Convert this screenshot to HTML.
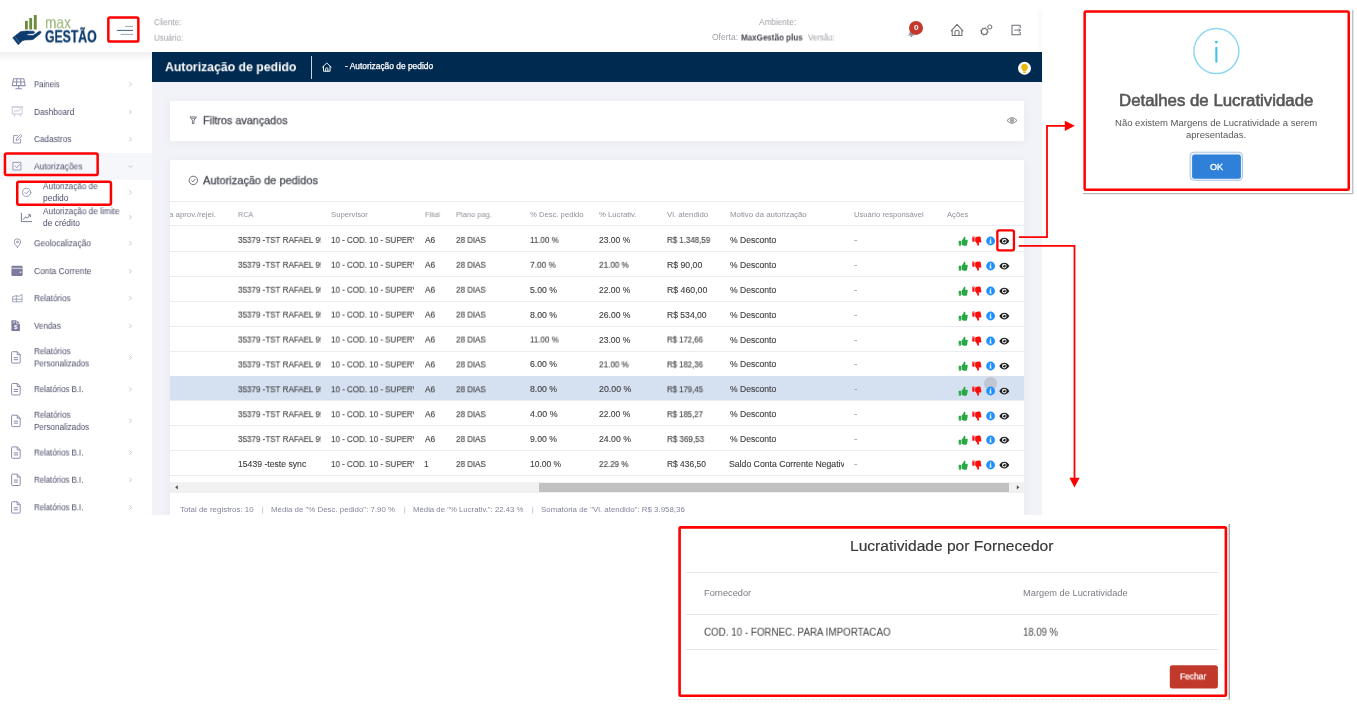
<!DOCTYPE html>
<html lang="pt-BR">
<head>
<meta charset="utf-8">
<title>maxGestão - Autorização de pedido</title>
<style>
*{box-sizing:border-box;margin:0;padding:0}
html,body{width:1357px;height:707px;overflow:hidden;background:#fff}
body{position:relative;font-family:"Liberation Sans",sans-serif;-webkit-font-smoothing:antialiased}
.t{position:absolute;white-space:nowrap;transform-origin:0 50%;display:block;will-change:transform}
.t i{font-style:normal}
.a{position:absolute}
svg{position:absolute;overflow:visible}
.app{position:absolute;left:0;top:0;width:1042px;height:515.4px;background:#fff;overflow:hidden}
.hdr{position:absolute;left:0;top:0;width:1042px;height:52px;background:#fff}
.side{position:absolute;left:0;top:52px;width:152px;height:463px;background:#fff}
.side:before{content:"";position:absolute;left:0;top:0;width:152px;height:9px;background:linear-gradient(#efeff2,#fff)}
.main{position:absolute;left:151.6px;top:81.5px;width:890.4px;height:433px;background:#f2f3f8}
.bar{position:absolute;left:151.6px;top:52px;width:890.4px;height:29.7px;background:#012a50}
.card{position:absolute;background:#fff;box-shadow:0 1px 9px rgba(82,63,105,.07)}
.hl{position:absolute;height:1px;background:#ebedf2}
</style>
</head>
<body>
<div class="app">
<header class="hdr">
<svg class="logo" style="left:0;top:0" width="110" height="52" viewBox="0 0 110 52">
<rect x="25" y="20.9" width="2.8" height="8.6" fill="#6c8b3c"/>
<rect x="29.3" y="18" width="2.8" height="11.5" fill="#6c8b3c"/>
<rect x="33.8" y="15" width="2.9" height="14.5" fill="#6c8b3c"/>
<path d="M12.7 37.8 L17.2 34.2 L20.8 31.6 L26.4 31 L33 31.2 Q34.8 31.4 34.5 32.6 Q34.3 33.5 33 33.6 L27.3 33.9 L26.9 35.3 L33 35.5 L39.4 31.3 Q40.6 30.9 41 31.9 Q41.2 32.8 40.4 33.5 L33.7 38.9 Q33 39.6 32 39.7 L24.9 40 L22.3 40.8 L18.3 44.8 Z" fill="#0e3b6d" stroke="#0e3b6d" stroke-width=".6" stroke-linejoin="round"/>
<path d="M15.2 37.2 L19.6 42.6" stroke="#fff" stroke-width=".5" opacity=".55"/>
</svg>
<span class="t" id="t0" style="left:45.0px;top:12px;font-size:16.5px;line-height:20px;color:#93ae6c;font-weight:400;transform:translateY(0.31px) scaleX(0.8277);">max</span>
<span class="t" id="t1" style="left:45.2px;top:26px;font-size:16.1px;line-height:20px;color:#0e3b6d;font-weight:700;transform:translateY(0.31px) scaleX(0.7592);-webkit-text-stroke:.35px #0e3b6d;">GESTÃO</span>
<svg style="left:110px;top:20px" width="28" height="20" viewBox="110 20 28 20">
<path d="M125.1 26.4H133M120.6 34.4H133" stroke="#93a7bf" stroke-width="1" fill="none"/><path d="M116.8 30.4H133" stroke="#4d6c90" stroke-width="1.1" fill="none"/></svg>
<span class="t" id="t2" style="left:153.7px;top:16px;font-size:8.5px;line-height:12px;color:#a0a1a8;font-weight:400;transform:translateY(0.14px) scaleX(0.9470);">Cliente:</span>
<span class="t" id="t3" style="left:153.7px;top:32px;font-size:8.5px;line-height:12px;color:#a0a1a8;font-weight:400;transform:translateY(-0.26px) scaleX(0.9192);">Usuário:</span>
<span class="t" id="t4" style="left:758.8px;top:16px;font-size:8.5px;line-height:12px;color:#a0a1a8;font-weight:400;transform:translateY(0.04px) scaleX(0.9718);">Ambiente:</span>
<span class="t" id="t5" style="left:712.4px;top:31px;font-size:8.5px;line-height:12px;color:#a0a1a8;font-weight:400;transform:translateY(0.44px) scaleX(1.0006);">Oferta:</span>
<span class="t" id="t6" style="left:740.8px;top:31px;font-size:8.5px;line-height:12px;color:#46474e;font-weight:700;transform:translateY(0.44px) scaleX(0.9450);">MaxGestão plus</span>
<span class="t" id="t7" style="left:807.8px;top:31px;font-size:8.5px;line-height:12px;color:#a0a1a8;font-weight:400;transform:translateY(0.44px) scaleX(0.9296);">Versão:</span>
<svg style="left:905px;top:18px" width="22" height="22" viewBox="905 18 22 22">
<path d="M908.2 35.4 q1.4-1.2 1.6-3.6 l3.2 0 q.2 2.4 1.6 3.6 z" fill="#8d8e9c"/>
<circle cx="911.4" cy="36.2" r=".9" fill="#8d8e9c"/>
<circle cx="916" cy="27.9" r="7" fill="#c5382c"/>
</svg>
<span class="t" id="t8" style="left:913.8px;top:22px;font-size:7.6px;line-height:11px;color:#fff;font-weight:700;transform:translateY(0.32px) scaleX(1.0863);">0</span>
<svg style="left:949px;top:22px" width="16" height="16" viewBox="949 22 16 16">
<path d="M951.2 30.9 L957 24.3 L962.9 30.9 M952.2 30 V35.4 H961.9 V30 M955 35.4 V31.2 Q955 30.4 957 30.4 Q959 30.4 959 31.2 V35.4" fill="none" stroke="#6e6e74" stroke-width="1.05" stroke-linejoin="round" stroke-linecap="round"/></svg>
<svg style="left:979px;top:22px" width="16" height="16" viewBox="979 22 16 16">
<circle cx="984.4" cy="31.5" r="3" fill="none" stroke="#6e6e74" stroke-width="1.05"/>
<circle cx="984.4" cy="31.5" r="3.8" fill="none" stroke="#6e6e74" stroke-width=".9" stroke-dasharray="1.2 1.78"/>
<circle cx="989.8" cy="27" r="2.1" fill="none" stroke="#6e6e74" stroke-width="1"/>
</svg>
<svg style="left:1009px;top:22px" width="16" height="16" viewBox="1009 22 16 16">
<path d="M1020.2 28 V25.2 H1012 V34.7 H1020.2 V32" fill="none" stroke="#6e6e74" stroke-width="1.05" stroke-linejoin="round"/>
<path d="M1014.6 30.1 H1020.4 M1018.8 28.6 L1020.5 30.1 L1018.8 31.6" fill="none" stroke="#6e6e74" stroke-width=".95" stroke-linejoin="round" stroke-linecap="round"/></svg>
<div class="a" style="left:1038px;top:10px;width:4px;height:40px;background:#fafafb"></div></header><nav class="side">
<div class="a" style="left:0;top:101px;width:152px;height:27px;background:#f6f7fb"></div></nav>
<span class="t" id="t9" style="left:33.9px;top:78px;font-size:8.7px;line-height:12px;color:#4a4c68;font-weight:400;transform:translateY(0.21px) scaleX(0.8947);">Paineis</span>
<span class="t" id="t10" style="left:33.9px;top:106px;font-size:8.7px;line-height:12px;color:#4a4c68;font-weight:400;transform:translateY(-0.09px) scaleX(0.9479);">Dashboard</span>
<span class="t" id="t11" style="left:33.9px;top:133px;font-size:8.7px;line-height:12px;color:#4a4c68;font-weight:400;transform:translateY(0.11px) scaleX(0.9442);">Cadastros</span>
<span class="t" id="t12" style="left:33.9px;top:160px;font-size:8.7px;line-height:12px;color:#4a4c68;font-weight:400;transform:translateY(0.41px) scaleX(0.9635);">Autorizações</span>
<span class="t" id="t13" style="left:33.9px;top:237px;font-size:8.7px;line-height:12px;color:#4a4c68;font-weight:400;transform:translateY(0.21px) scaleX(0.9578);">Geolocalização</span>
<span class="t" id="t14" style="left:33.9px;top:265px;font-size:8.7px;line-height:12px;color:#4a4c68;font-weight:400;transform:translateY(0.11px) scaleX(0.9662);">Conta Corrente</span>
<span class="t" id="t15" style="left:33.9px;top:292px;font-size:8.7px;line-height:12px;color:#4a4c68;font-weight:400;transform:translateY(0.21px) scaleX(0.9355);">Relatórios</span>
<span class="t" id="t16" style="left:33.9px;top:320px;font-size:8.7px;line-height:12px;color:#4a4c68;font-weight:400;transform:translateY(-0.19px) scaleX(0.9241);">Vendas</span>
<span class="t" id="t17" style="left:33.9px;top:383px;font-size:8.7px;line-height:12px;color:#4a4c68;font-weight:400;transform:translateY(0.11px) scaleX(0.9054);">Relatórios B.I.</span>
<span class="t" id="t18" style="left:33.9px;top:447px;font-size:8.7px;line-height:12px;color:#4a4c68;font-weight:400;transform:translateY(-0.49px) scaleX(0.9054);">Relatórios B.I.</span>
<span class="t" id="t19" style="left:33.9px;top:474px;font-size:8.7px;line-height:12px;color:#4a4c68;font-weight:400;transform:translateY(-0.29px) scaleX(0.9054);">Relatórios B.I.</span>
<span class="t" id="t20" style="left:33.9px;top:501px;font-size:8.7px;line-height:12px;color:#4a4c68;font-weight:400;transform:translateY(0.31px) scaleX(0.9054);">Relatórios B.I.</span>
<span class="t" id="t21" style="left:33.9px;top:345px;font-size:8.7px;line-height:12px;color:#4a4c68;font-weight:400;transform:translateY(0.21px) scaleX(0.9355);">Relatórios</span>
<span class="t" id="t22" style="left:33.9px;top:357px;font-size:8.7px;line-height:12px;color:#4a4c68;font-weight:400;transform:translateY(0.41px) scaleX(0.9275);">Personalizados</span>
<span class="t" id="t23" style="left:33.9px;top:409px;font-size:8.7px;line-height:12px;color:#4a4c68;font-weight:400;transform:translateY(-0.29px) scaleX(0.9355);">Relatórios</span>
<span class="t" id="t24" style="left:33.9px;top:421px;font-size:8.7px;line-height:12px;color:#4a4c68;font-weight:400;transform:translateY(-0.09px) scaleX(0.9275);">Personalizados</span>
<span class="t" id="t25" style="left:42.8px;top:180px;font-size:8.3px;line-height:12px;color:#4a4c68;font-weight:400;transform:translateY(0.17px) scaleX(0.9899);">Autorização de</span>
<span class="t" id="t26" style="left:42.8px;top:192px;font-size:8.3px;line-height:12px;color:#4a4c68;font-weight:400;transform:translateY(0.17px) scaleX(1.0232);">pedido</span>
<span class="t" id="t27" style="left:42.8px;top:205px;font-size:8.3px;line-height:12px;color:#4a4c68;font-weight:400;transform:translateY(0.17px) scaleX(0.9920);">Autorização de limite</span>
<span class="t" id="t28" style="left:42.8px;top:217px;font-size:8.3px;line-height:12px;color:#4a4c68;font-weight:400;transform:translateY(-0.03px) scaleX(1.0127);">de crédito</span>
<svg style="left:0;top:0" width="152" height="515" viewBox="0 0 152 515"><path d="M129.4 82.2 l2 2.1 l-2 2.1" fill="none" stroke="#b3b5c6" stroke-width=".8"/><path d="M129.4 109.9 l2 2.1 l-2 2.1" fill="none" stroke="#b3b5c6" stroke-width=".8"/><path d="M129.4 137.1 l2 2.1 l-2 2.1" fill="none" stroke="#b3b5c6" stroke-width=".8"/><path d="M129.4 190.3 l2 2.1 l-2 2.1" fill="none" stroke="#b3b5c6" stroke-width=".8"/><path d="M129.4 215.1 l2 2.1 l-2 2.1" fill="none" stroke="#b3b5c6" stroke-width=".8"/><path d="M129.4 241.2 l2 2.1 l-2 2.1" fill="none" stroke="#b3b5c6" stroke-width=".8"/><path d="M129.4 269.1 l2 2.1 l-2 2.1" fill="none" stroke="#b3b5c6" stroke-width=".8"/><path d="M129.4 296.2 l2 2.1 l-2 2.1" fill="none" stroke="#b3b5c6" stroke-width=".8"/><path d="M129.4 323.8 l2 2.1 l-2 2.1" fill="none" stroke="#b3b5c6" stroke-width=".8"/><path d="M129.4 355.3 l2 2.1 l-2 2.1" fill="none" stroke="#b3b5c6" stroke-width=".8"/><path d="M129.4 387.1 l2 2.1 l-2 2.1" fill="none" stroke="#b3b5c6" stroke-width=".8"/><path d="M129.4 418.8 l2 2.1 l-2 2.1" fill="none" stroke="#b3b5c6" stroke-width=".8"/><path d="M129.4 450.5 l2 2.1 l-2 2.1" fill="none" stroke="#b3b5c6" stroke-width=".8"/><path d="M129.4 477.7 l2 2.1 l-2 2.1" fill="none" stroke="#b3b5c6" stroke-width=".8"/><path d="M129.4 505.3 l2 2.1 l-2 2.1" fill="none" stroke="#b3b5c6" stroke-width=".8"/><path d="M128.6 165.7 l1.9 1.7 l1.9 -1.7" fill="none" stroke="#b3b5c6" stroke-width=".8"/><g fill="none" stroke="#8e90ad" stroke-width=".9" stroke-linejoin="round" stroke-linecap="round"><path d="M13.6 78.7 H23.8 L25.2 85.6 H12.2 Z M12.9 82 H24.5 M16.9 78.7 L16.4 85.6 M20.5 78.7 L21 85.6 M18.7 85.6 V88.4 M15.8 88.7 H21.6" stroke-width="1.05"/><g stroke="#c3c5d6"><path d="M12.6 107 H22.2 V114 H12.6 Z M12 107 H22.8 M15 114 L14.2 116.4 M19.8 114 L20.6 116.4"/></g><path d="M14 112.2 L16 110.4 L17.6 111.4 L20.6 108.8" stroke="#b9bbd0"/><path d="M17.4 135.6 H13.4 V143 H20.6 V139.2 M16.2 140.2 L16.6 138.4 L20.6 134.4 L22 135.8 L18 139.8 Z"/><path d="M13.3 162.4 H20.9 V170 H13.3 Z M15.2 166 L16.8 167.7 L19.4 164.6"/><circle cx="26.7" cy="192.4" r="4.1"/><path d="M24.8 192.5 L26.2 193.9 L28.7 191"/><path d="M21.4 213.2 V221.6 H31.6 M23.4 219.4 L25.6 216.8 L27.4 218.2 L30.2 215 M28.4 214.8 H30.4 V216.8" stroke="#6c6e8c"/><path d="M17.4 247.4 Q14.2 243.6 14.2 242 A3.2 3.2 0 0 1 20.6 242 Q20.6 243.6 17.4 247.4 Z"/><circle cx="17.4" cy="242" r=".9"/><path d="M13 296.6 L16.4 295.6 L19 296.4 L22 294.4 V301.8 H13 Z M13 299.2 H22 M16.4 295.6 V301.8" stroke="#9c9eb8"/></g><path d="M12.6 265.8 H21.4 Q22.6 265.8 22.6 267 V274.8 Q22.6 276 21.4 276 H12.6 Q11.4 276 11.4 274.8 V267 Q11.4 265.8 12.6 265.8 Z" fill="#7d7c9e"/><path d="M11.4 268.3 H22.6" stroke="#fff" stroke-width=".7"/><circle cx="20.4" cy="272.2" r=".8" fill="#fff"/><path d="M11.4 320.2 H16.6 L19.9 323.4 V331 H11.4 Z" fill="#7d7c9e"/><path d="M16.4 320 V323.6 H20" stroke="#fff" stroke-width=".6" fill="none"/><path d="M12.8 321.6 H15 M12.8 322.8 H15" stroke="#fff" stroke-width=".5"/><path d="M12.6 351.7 H17.4 L20.2 354.5 V362.1 Q20.2 363.1 19.2 363.1 H12.6 Q11.6 363.1 11.6 362.1 V352.7 Q11.6 351.7 12.6 351.7 Z M17.2 351.9 V354.7 H20 M13.8 357.7 H18 M13.8 359.7 H18" fill="none" stroke="#7f81a2" stroke-width=".9" stroke-linejoin="round"/><path d="M12.6 383.5 H17.4 L20.2 386.3 V393.9 Q20.2 394.9 19.2 394.9 H12.6 Q11.6 394.9 11.6 393.9 V384.5 Q11.6 383.5 12.6 383.5 Z M17.2 383.7 V386.5 H20 M13.8 389.5 H18 M13.8 391.5 H18" fill="none" stroke="#7f81a2" stroke-width=".9" stroke-linejoin="round"/><path d="M12.6 415.2 H17.4 L20.2 418.0 V425.6 Q20.2 426.6 19.2 426.6 H12.6 Q11.6 426.6 11.6 425.6 V416.2 Q11.6 415.2 12.6 415.2 Z M17.2 415.4 V418.2 H20 M13.8 421.2 H18 M13.8 423.2 H18" fill="none" stroke="#7f81a2" stroke-width=".9" stroke-linejoin="round"/><path d="M12.6 446.9 H17.4 L20.2 449.7 V457.3 Q20.2 458.3 19.2 458.3 H12.6 Q11.6 458.3 11.6 457.3 V447.9 Q11.6 446.9 12.6 446.9 Z M17.2 447.1 V449.9 H20 M13.8 452.9 H18 M13.8 454.9 H18" fill="none" stroke="#7f81a2" stroke-width=".9" stroke-linejoin="round"/><path d="M12.6 474.1 H17.4 L20.2 476.9 V484.5 Q20.2 485.5 19.2 485.5 H12.6 Q11.6 485.5 11.6 484.5 V475.1 Q11.6 474.1 12.6 474.1 Z M17.2 474.3 V477.1 H20 M13.8 480.1 H18 M13.8 482.1 H18" fill="none" stroke="#7f81a2" stroke-width=".9" stroke-linejoin="round"/><path d="M12.6 501.7 H17.4 L20.2 504.5 V512.1 Q20.2 513.1 19.2 513.1 H12.6 Q11.6 513.1 11.6 512.1 V502.7 Q11.6 501.7 12.6 501.7 Z M17.2 501.9 V504.7 H20 M13.8 507.7 H18 M13.8 509.7 H18" fill="none" stroke="#7f81a2" stroke-width=".9" stroke-linejoin="round"/></svg>
<span class="t" id="t29" style="left:13.6px;top:323px;font-size:6px;line-height:8px;color:#fff;font-weight:700;transform:translateY(0.05px) scaleX(1.0766);">$</span>
<div class="bar"></div>
<span class="t" id="t30" style="left:164.6px;top:58px;font-size:13.0px;line-height:17px;color:#fff;font-weight:700;transform:translateY(0.25px) scaleX(0.9426);">Autorização de pedido</span>
<div class="a" style="left:311px;top:55.5px;width:1px;height:23px;background:#c9d3e0"></div>
<svg style="left:321px;top:61px" width="12" height="12" viewBox="321 61 12 12">
<path d="M322.4 67.2 L326.8 63 L331.2 67.2 M323.5 66.4 V71.2 H330.1 V66.4 M325.7 71.2 V68.6 Q325.7 67.8 326.8 67.8 Q327.9 67.8 327.9 68.6 V71.2" fill="none" stroke="#fff" stroke-width=".95" stroke-linejoin="round" stroke-linecap="round"/></svg>
<span class="t" id="t31" style="left:345.2px;top:61px;font-size:8.2px;line-height:11px;color:#fff;font-weight:400;transform:translateY(0.44px) scaleX(1.0240);-webkit-text-stroke:.25px #fff;">- Autorização de pedido</span>
<svg style="left:1017px;top:61px" width="15" height="15" viewBox="1017 61 15 15">
<circle cx="1024.5" cy="68.3" r="6.45" fill="#fff"/>
<path d="M1024.5 63.8 a3.45 3.45 0 0 1 2.3 6 q-.7 .8 -.8 1.7 h-3 q-.1 -.9 -.8 -1.7 a3.45 3.45 0 0 1 2.3 -6 Z" fill="#ebb90d"/>
<rect x="1023.1" y="71.9" width="2.8" height="1.1" rx=".4" fill="#ebb90d"/>
</svg><main class="main"></main>
<section class="card" style="left:170px;top:101px;width:854px;height:40px"></section>
<svg style="left:188px;top:116px" width="10" height="10" viewBox="188 116 10 10">
<path d="M189.9 116.9 H196.5 L194 120.2 V123.6 H192.4 V120.2 Z" fill="none" stroke="#4a4c58" stroke-width=".75" stroke-linejoin="round"/><path d="M191.4 118.4 H195" stroke="#4a4c58" stroke-width=".6"/></svg>
<span class="t" id="t32" style="left:203.3px;top:113px;font-size:11.3px;line-height:14px;color:#494b55;font-weight:400;transform:translateY(0.25px) scaleX(0.9554);-webkit-text-stroke:.3px #494b55;">Filtros avançados</span>
<svg style="left:1006px;top:116px" width="12" height="10" viewBox="1006 116 12 10">
<path d="M1007 120.5 Q1012 114.8 1017 120.5 Q1012 126.2 1007 120.5 Z" fill="none" stroke="#66676e" stroke-width=".8"/>
<circle cx="1012" cy="120.5" r="1.7" fill="none" stroke="#66676e" stroke-width=".8"/><circle cx="1012" cy="120.5" r=".7" fill="#55565c"/></svg>
<section class="card" style="left:170px;top:160px;width:854px;height:360px"></section>
<svg style="left:188px;top:175px" width="10" height="10" viewBox="188 175 10 10">
<circle cx="193.3" cy="180.4" r="4.2" fill="none" stroke="#4a4c58" stroke-width=".8"/>
<path d="M191.4 180.5 L192.8 181.9 L195.3 179" fill="none" stroke="#4a4c58" stroke-width=".8"/></svg>
<span class="t" id="t33" style="left:203.1px;top:173px;font-size:11.3px;line-height:14px;color:#494b55;font-weight:400;transform:translateY(0.25px) scaleX(0.9739);-webkit-text-stroke:.3px #494b55;">Autorização de pedidos</span>
<div class="hl" style="left:170px;top:201px;width:854px"></div>
<div class="hl" style="left:170px;top:225px;width:854px"></div>
<div class="a" style="left:170.0px;top:209px;width:50.0px;height:11px;overflow:hidden">
<span class="t" id="t34" style="left:-1.4px;top:0px;font-size:7.6px;line-height:11px;color:#8f919c;font-weight:400;transform:translateY(0.02px) scaleX(1.0318);">a aprov./rejei.</span></div>
<span class="t" id="t35" style="left:237.7px;top:209px;font-size:7.6px;line-height:11px;color:#8f919c;font-weight:400;transform:translateY(0.02px) scaleX(0.9472);">RCA</span>
<span class="t" id="t36" style="left:331.4px;top:209px;font-size:7.6px;line-height:11px;color:#8f919c;font-weight:400;transform:translateY(0.02px) scaleX(1.0166);">Supervisor</span>
<span class="t" id="t37" style="left:424.8px;top:209px;font-size:7.6px;line-height:11px;color:#8f919c;font-weight:400;transform:translateY(0.02px) scaleX(0.9536);">Filial</span>
<span class="t" id="t38" style="left:455.6px;top:209px;font-size:7.6px;line-height:11px;color:#8f919c;font-weight:400;transform:translateY(0.02px) scaleX(0.9804);">Plano pag.</span>
<span class="t" id="t39" style="left:530.3px;top:209px;font-size:7.6px;line-height:11px;color:#8f919c;font-weight:400;transform:translateY(0.02px) scaleX(1.0078);">% Desc. pedido</span>
<span class="t" id="t40" style="left:598.7px;top:209px;font-size:7.6px;line-height:11px;color:#8f919c;font-weight:400;transform:translateY(0.02px) scaleX(1.0135);">% Lucrativ.</span>
<span class="t" id="t41" style="left:667.1px;top:209px;font-size:7.6px;line-height:11px;color:#8f919c;font-weight:400;transform:translateY(0.02px) scaleX(1.0247);">Vl. atendido</span>
<span class="t" id="t42" style="left:729.6px;top:209px;font-size:7.6px;line-height:11px;color:#8f919c;font-weight:400;transform:translateY(0.02px) scaleX(1.0323);">Motivo da autorização</span>
<span class="t" id="t43" style="left:853.7px;top:209px;font-size:7.6px;line-height:11px;color:#8f919c;font-weight:400;transform:translateY(0.02px) scaleX(1.0053);">Usuário responsável</span>
<span class="t" id="t44" style="left:947.3px;top:209px;font-size:7.6px;line-height:11px;color:#8f919c;font-weight:400;transform:translateY(0.02px) scaleX(1.0043);">Ações</span>
<div class="row">
<div class="hl" style="left:170px;top:251px;width:854px"></div>
<div class="a" style="left:237.7px;top:234px;width:83.7px;height:12px;overflow:hidden">
<span class="t" id="t45" style="left:0.0px;top:0px;font-size:8.4px;line-height:12px;color:#404040;font-weight:400;transform:translateY(-0.09px) scaleX(0.9612);-webkit-text-stroke:.12px #404040;"><i>35379 -TST RAFAEL 9</i>9</span></div>
<div class="a" style="left:331.0px;top:234px;width:83.2px;height:12px;overflow:hidden">
<span class="t" id="t46" style="left:0.4px;top:0px;font-size:8.4px;line-height:12px;color:#404040;font-weight:400;transform:translateY(-0.09px) scaleX(0.9546);-webkit-text-stroke:.12px #404040;"><i>10 - COD. 10 - SUPER</i>V</span></div>
<span class="t" id="t47" style="left:424.6px;top:234px;font-size:8.4px;line-height:12px;color:#404040;font-weight:400;transform:translateY(-0.09px) scaleX(0.9951);-webkit-text-stroke:.12px #404040;">A6</span>
<span class="t" id="t48" style="left:455.6px;top:234px;font-size:8.4px;line-height:12px;color:#404040;font-weight:400;transform:translateY(-0.09px) scaleX(0.9582);-webkit-text-stroke:.12px #404040;">28 DIAS</span>
<span class="t" id="t49" style="left:530.3px;top:234px;font-size:8.4px;line-height:12px;color:#404040;font-weight:400;transform:translateY(-0.09px) scaleX(0.9499);-webkit-text-stroke:.12px #404040;">11.00 %</span>
<span class="t" id="t50" style="left:598.8px;top:234px;font-size:8.4px;line-height:12px;color:#404040;font-weight:400;transform:translateY(-0.09px) scaleX(1.0151);-webkit-text-stroke:.12px #404040;">23.00 %</span>
<span class="t" id="t51" style="left:667.2px;top:234px;font-size:8.4px;line-height:12px;color:#404040;font-weight:400;transform:translateY(-0.09px) scaleX(0.9465);-webkit-text-stroke:.12px #404040;">R$ 1.348,59</span>
<span class="t" id="t52" style="left:729.6px;top:234px;font-size:8.4px;line-height:12px;color:#404040;font-weight:400;transform:translateY(-0.09px) scaleX(1.0231);-webkit-text-stroke:.12px #404040;">% Desconto</span>
<span class="t" id="t53" style="left:853.7px;top:234px;font-size:8.4px;line-height:12px;color:#8f92a3;font-weight:400;transform:translateY(-0.09px) scaleX(1.2514);">-</span>
<svg style="left:955px;top:235.2px" width="60" height="12" viewBox="955 235.2 60 12"><path transform="translate(958.7 236.85) scale(.01777)" fill="#28a745" d="M104 224H24c-13.255 0-24 10.745-24 24v240c0 13.255 10.745 24 24 24h80c13.255 0 24-10.745 24-24V248c0-13.255-10.745-24-24-24zM64 472c-13.255 0-24-10.745-24-24s10.745-24 24-24 24 10.745 24 24-10.745 24-24 24zM384 81.452c0 42.416-25.97 66.208-33.277 94.548h101.723c33.397 0 59.397 27.746 59.553 58.098.084 17.938-7.546 37.249-19.439 49.197l-.11.11c9.836 23.337 8.237 56.037-9.308 79.469 8.681 25.895-.069 57.704-16.382 74.757 4.298 17.598 2.244 32.575-6.148 44.632C440.202 511.587 389.616 512 346.839 512l-2.845-.001c-48.287-.017-87.806-17.598-119.56-31.725-15.957-7.099-36.821-15.887-52.651-16.178-6.54-.12-11.783-5.457-11.783-11.998v-213.77c0-3.2 1.282-6.271 3.558-8.521 39.614-39.144 56.648-80.587 89.117-113.111 14.804-14.832 20.188-37.236 25.393-58.902C282.515 39.293 291.817 0 312 0c24 0 72 8 72 81.452z"/><path transform="translate(972.3 245.85) scale(.01777 -.01777)" fill="#fb0d0d" d="M104 224H24c-13.255 0-24 10.745-24 24v240c0 13.255 10.745 24 24 24h80c13.255 0 24-10.745 24-24V248c0-13.255-10.745-24-24-24zM64 472c-13.255 0-24-10.745-24-24s10.745-24 24-24 24 10.745 24 24-10.745 24-24 24zM384 81.452c0 42.416-25.97 66.208-33.277 94.548h101.723c33.397 0 59.397 27.746 59.553 58.098.084 17.938-7.546 37.249-19.439 49.197l-.11.11c9.836 23.337 8.237 56.037-9.308 79.469 8.681 25.895-.069 57.704-16.382 74.757 4.298 17.598 2.244 32.575-6.148 44.632C440.202 511.587 389.616 512 346.839 512l-2.845-.001c-48.287-.017-87.806-17.598-119.56-31.725-15.957-7.099-36.821-15.887-52.651-16.178-6.54-.12-11.783-5.457-11.783-11.998v-213.77c0-3.2 1.282-6.271 3.558-8.521 39.614-39.144 56.648-80.587 89.117-113.111 14.804-14.832 20.188-37.236 25.393-58.902C282.515 39.293 291.817 0 312 0c24 0 72 8 72 81.452z"/><circle cx="990.6" cy="241.2" r="4.4" fill="#1e8fff"/><circle cx="990.6" cy="239.2" r=".7" fill="#fff"/><path d="M989.8 240.4 h1.4 v2.6 h.4 v.7 h-2.2 v-.7 h.4 v-1.9 h-.4 z" fill="#fff"/><path d="M999.3 241.3 C1001.6 236.7 1007 236.7 1009.3 241.3 C1007 245.9 1001.6 245.9 999.3 241.3 Z" fill="#1c1c1c"/><circle cx="1004.3" cy="241.3" r="2.3" fill="#fff"/><circle cx="1004.3" cy="241.3" r="1.45" fill="#1c1c1c"/><circle cx="1003.7" cy="240.7" r=".55" fill="#fff"/></svg></div>
<div class="row">
<div class="hl" style="left:170px;top:276px;width:854px"></div>
<div class="a" style="left:237.7px;top:259px;width:83.7px;height:12px;overflow:hidden">
<span class="t" id="t54" style="left:0.0px;top:0px;font-size:8.4px;line-height:12px;color:#404040;font-weight:400;transform:translateY(-0.19px) scaleX(0.9612);-webkit-text-stroke:.12px #404040;"><i>35379 -TST RAFAEL 9</i>9</span></div>
<div class="a" style="left:331.0px;top:259px;width:83.2px;height:12px;overflow:hidden">
<span class="t" id="t55" style="left:0.4px;top:0px;font-size:8.4px;line-height:12px;color:#404040;font-weight:400;transform:translateY(-0.19px) scaleX(0.9546);-webkit-text-stroke:.12px #404040;"><i>10 - COD. 10 - SUPER</i>V</span></div>
<span class="t" id="t56" style="left:424.6px;top:259px;font-size:8.4px;line-height:12px;color:#404040;font-weight:400;transform:translateY(-0.19px) scaleX(0.9951);-webkit-text-stroke:.12px #404040;">A6</span>
<span class="t" id="t57" style="left:455.6px;top:259px;font-size:8.4px;line-height:12px;color:#404040;font-weight:400;transform:translateY(-0.19px) scaleX(0.9582);-webkit-text-stroke:.12px #404040;">28 DIAS</span>
<span class="t" id="t58" style="left:530.3px;top:259px;font-size:8.4px;line-height:12px;color:#404040;font-weight:400;transform:translateY(-0.19px) scaleX(0.9855);-webkit-text-stroke:.12px #404040;">7.00 %</span>
<span class="t" id="t59" style="left:598.8px;top:259px;font-size:8.4px;line-height:12px;color:#404040;font-weight:400;transform:translateY(-0.19px) scaleX(0.9696);-webkit-text-stroke:.12px #404040;">21.00 %</span>
<span class="t" id="t60" style="left:667.2px;top:259px;font-size:8.4px;line-height:12px;color:#404040;font-weight:400;transform:translateY(-0.19px) scaleX(1.0382);-webkit-text-stroke:.12px #404040;">R$ 90,00</span>
<span class="t" id="t61" style="left:729.6px;top:259px;font-size:8.4px;line-height:12px;color:#404040;font-weight:400;transform:translateY(-0.19px) scaleX(1.0231);-webkit-text-stroke:.12px #404040;">% Desconto</span>
<span class="t" id="t62" style="left:853.7px;top:259px;font-size:8.4px;line-height:12px;color:#8f92a3;font-weight:400;transform:translateY(-0.19px) scaleX(1.2514);">-</span>
<svg style="left:955px;top:260.1px" width="60" height="12" viewBox="955 260.1 60 12"><path transform="translate(958.7 261.75) scale(.01777)" fill="#28a745" d="M104 224H24c-13.255 0-24 10.745-24 24v240c0 13.255 10.745 24 24 24h80c13.255 0 24-10.745 24-24V248c0-13.255-10.745-24-24-24zM64 472c-13.255 0-24-10.745-24-24s10.745-24 24-24 24 10.745 24 24-10.745 24-24 24zM384 81.452c0 42.416-25.97 66.208-33.277 94.548h101.723c33.397 0 59.397 27.746 59.553 58.098.084 17.938-7.546 37.249-19.439 49.197l-.11.11c9.836 23.337 8.237 56.037-9.308 79.469 8.681 25.895-.069 57.704-16.382 74.757 4.298 17.598 2.244 32.575-6.148 44.632C440.202 511.587 389.616 512 346.839 512l-2.845-.001c-48.287-.017-87.806-17.598-119.56-31.725-15.957-7.099-36.821-15.887-52.651-16.178-6.54-.12-11.783-5.457-11.783-11.998v-213.77c0-3.2 1.282-6.271 3.558-8.521 39.614-39.144 56.648-80.587 89.117-113.111 14.804-14.832 20.188-37.236 25.393-58.902C282.515 39.293 291.817 0 312 0c24 0 72 8 72 81.452z"/><path transform="translate(972.3 270.75) scale(.01777 -.01777)" fill="#fb0d0d" d="M104 224H24c-13.255 0-24 10.745-24 24v240c0 13.255 10.745 24 24 24h80c13.255 0 24-10.745 24-24V248c0-13.255-10.745-24-24-24zM64 472c-13.255 0-24-10.745-24-24s10.745-24 24-24 24 10.745 24 24-10.745 24-24 24zM384 81.452c0 42.416-25.97 66.208-33.277 94.548h101.723c33.397 0 59.397 27.746 59.553 58.098.084 17.938-7.546 37.249-19.439 49.197l-.11.11c9.836 23.337 8.237 56.037-9.308 79.469 8.681 25.895-.069 57.704-16.382 74.757 4.298 17.598 2.244 32.575-6.148 44.632C440.202 511.587 389.616 512 346.839 512l-2.845-.001c-48.287-.017-87.806-17.598-119.56-31.725-15.957-7.099-36.821-15.887-52.651-16.178-6.54-.12-11.783-5.457-11.783-11.998v-213.77c0-3.2 1.282-6.271 3.558-8.521 39.614-39.144 56.648-80.587 89.117-113.111 14.804-14.832 20.188-37.236 25.393-58.902C282.515 39.293 291.817 0 312 0c24 0 72 8 72 81.452z"/><circle cx="990.6" cy="266.1" r="4.4" fill="#1e8fff"/><circle cx="990.6" cy="264.1" r=".7" fill="#fff"/><path d="M989.8 265.3 h1.4 v2.6 h.4 v.7 h-2.2 v-.7 h.4 v-1.9 h-.4 z" fill="#fff"/><path d="M999.3 266.2 C1001.6 261.6 1007 261.6 1009.3 266.2 C1007 270.8 1001.6 270.8 999.3 266.2 Z" fill="#1c1c1c"/><circle cx="1004.3" cy="266.2" r="2.3" fill="#fff"/><circle cx="1004.3" cy="266.2" r="1.45" fill="#1c1c1c"/><circle cx="1003.7" cy="265.6" r=".55" fill="#fff"/></svg></div>
<div class="row">
<div class="hl" style="left:170px;top:301px;width:854px"></div>
<div class="a" style="left:237.7px;top:284px;width:83.7px;height:12px;overflow:hidden">
<span class="t" id="t63" style="left:0.0px;top:0px;font-size:8.4px;line-height:12px;color:#404040;font-weight:400;transform:translateY(-0.29px) scaleX(0.9612);-webkit-text-stroke:.12px #404040;"><i>35379 -TST RAFAEL 9</i>9</span></div>
<div class="a" style="left:331.0px;top:284px;width:83.2px;height:12px;overflow:hidden">
<span class="t" id="t64" style="left:0.4px;top:0px;font-size:8.4px;line-height:12px;color:#404040;font-weight:400;transform:translateY(-0.29px) scaleX(0.9546);-webkit-text-stroke:.12px #404040;"><i>10 - COD. 10 - SUPER</i>V</span></div>
<span class="t" id="t65" style="left:424.6px;top:284px;font-size:8.4px;line-height:12px;color:#404040;font-weight:400;transform:translateY(-0.29px) scaleX(0.9951);-webkit-text-stroke:.12px #404040;">A6</span>
<span class="t" id="t66" style="left:455.6px;top:284px;font-size:8.4px;line-height:12px;color:#404040;font-weight:400;transform:translateY(-0.29px) scaleX(0.9582);-webkit-text-stroke:.12px #404040;">28 DIAS</span>
<span class="t" id="t67" style="left:530.3px;top:284px;font-size:8.4px;line-height:12px;color:#404040;font-weight:400;transform:translateY(-0.29px) scaleX(1.0392);-webkit-text-stroke:.12px #404040;">5.00 %</span>
<span class="t" id="t68" style="left:598.8px;top:284px;font-size:8.4px;line-height:12px;color:#404040;font-weight:400;transform:translateY(-0.29px) scaleX(1.0151);-webkit-text-stroke:.12px #404040;">22.00 %</span>
<span class="t" id="t69" style="left:667.2px;top:284px;font-size:8.4px;line-height:12px;color:#404040;font-weight:400;transform:translateY(-0.29px) scaleX(1.0425);-webkit-text-stroke:.12px #404040;">R$ 460,00</span>
<span class="t" id="t70" style="left:729.6px;top:284px;font-size:8.4px;line-height:12px;color:#404040;font-weight:400;transform:translateY(-0.29px) scaleX(1.0231);-webkit-text-stroke:.12px #404040;">% Desconto</span>
<span class="t" id="t71" style="left:853.7px;top:284px;font-size:8.4px;line-height:12px;color:#8f92a3;font-weight:400;transform:translateY(-0.29px) scaleX(1.2514);">-</span>
<svg style="left:955px;top:285.0px" width="60" height="12" viewBox="955 285.0 60 12"><path transform="translate(958.7 286.65) scale(.01777)" fill="#28a745" d="M104 224H24c-13.255 0-24 10.745-24 24v240c0 13.255 10.745 24 24 24h80c13.255 0 24-10.745 24-24V248c0-13.255-10.745-24-24-24zM64 472c-13.255 0-24-10.745-24-24s10.745-24 24-24 24 10.745 24 24-10.745 24-24 24zM384 81.452c0 42.416-25.97 66.208-33.277 94.548h101.723c33.397 0 59.397 27.746 59.553 58.098.084 17.938-7.546 37.249-19.439 49.197l-.11.11c9.836 23.337 8.237 56.037-9.308 79.469 8.681 25.895-.069 57.704-16.382 74.757 4.298 17.598 2.244 32.575-6.148 44.632C440.202 511.587 389.616 512 346.839 512l-2.845-.001c-48.287-.017-87.806-17.598-119.56-31.725-15.957-7.099-36.821-15.887-52.651-16.178-6.54-.12-11.783-5.457-11.783-11.998v-213.77c0-3.2 1.282-6.271 3.558-8.521 39.614-39.144 56.648-80.587 89.117-113.111 14.804-14.832 20.188-37.236 25.393-58.902C282.515 39.293 291.817 0 312 0c24 0 72 8 72 81.452z"/><path transform="translate(972.3 295.65) scale(.01777 -.01777)" fill="#fb0d0d" d="M104 224H24c-13.255 0-24 10.745-24 24v240c0 13.255 10.745 24 24 24h80c13.255 0 24-10.745 24-24V248c0-13.255-10.745-24-24-24zM64 472c-13.255 0-24-10.745-24-24s10.745-24 24-24 24 10.745 24 24-10.745 24-24 24zM384 81.452c0 42.416-25.97 66.208-33.277 94.548h101.723c33.397 0 59.397 27.746 59.553 58.098.084 17.938-7.546 37.249-19.439 49.197l-.11.11c9.836 23.337 8.237 56.037-9.308 79.469 8.681 25.895-.069 57.704-16.382 74.757 4.298 17.598 2.244 32.575-6.148 44.632C440.202 511.587 389.616 512 346.839 512l-2.845-.001c-48.287-.017-87.806-17.598-119.56-31.725-15.957-7.099-36.821-15.887-52.651-16.178-6.54-.12-11.783-5.457-11.783-11.998v-213.77c0-3.2 1.282-6.271 3.558-8.521 39.614-39.144 56.648-80.587 89.117-113.111 14.804-14.832 20.188-37.236 25.393-58.902C282.515 39.293 291.817 0 312 0c24 0 72 8 72 81.452z"/><circle cx="990.6" cy="291.0" r="4.4" fill="#1e8fff"/><circle cx="990.6" cy="289.0" r=".7" fill="#fff"/><path d="M989.8 290.2 h1.4 v2.6 h.4 v.7 h-2.2 v-.7 h.4 v-1.9 h-.4 z" fill="#fff"/><path d="M999.3 291.1 C1001.6 286.5 1007 286.5 1009.3 291.1 C1007 295.7 1001.6 295.7 999.3 291.1 Z" fill="#1c1c1c"/><circle cx="1004.3" cy="291.1" r="2.3" fill="#fff"/><circle cx="1004.3" cy="291.1" r="1.45" fill="#1c1c1c"/><circle cx="1003.7" cy="290.5" r=".55" fill="#fff"/></svg></div>
<div class="row">
<div class="hl" style="left:170px;top:326px;width:854px"></div>
<div class="a" style="left:237.7px;top:309px;width:83.7px;height:12px;overflow:hidden">
<span class="t" id="t72" style="left:0.0px;top:0px;font-size:8.4px;line-height:12px;color:#404040;font-weight:400;transform:translateY(-0.39px) scaleX(0.9612);-webkit-text-stroke:.12px #404040;"><i>35379 -TST RAFAEL 9</i>9</span></div>
<div class="a" style="left:331.0px;top:309px;width:83.2px;height:12px;overflow:hidden">
<span class="t" id="t73" style="left:0.4px;top:0px;font-size:8.4px;line-height:12px;color:#404040;font-weight:400;transform:translateY(-0.39px) scaleX(0.9546);-webkit-text-stroke:.12px #404040;"><i>10 - COD. 10 - SUPER</i>V</span></div>
<span class="t" id="t74" style="left:424.6px;top:309px;font-size:8.4px;line-height:12px;color:#404040;font-weight:400;transform:translateY(-0.39px) scaleX(0.9951);-webkit-text-stroke:.12px #404040;">A6</span>
<span class="t" id="t75" style="left:455.6px;top:309px;font-size:8.4px;line-height:12px;color:#404040;font-weight:400;transform:translateY(-0.39px) scaleX(0.9582);-webkit-text-stroke:.12px #404040;">28 DIAS</span>
<span class="t" id="t76" style="left:530.3px;top:309px;font-size:8.4px;line-height:12px;color:#404040;font-weight:400;transform:translateY(-0.39px) scaleX(1.0392);-webkit-text-stroke:.12px #404040;">8.00 %</span>
<span class="t" id="t77" style="left:598.8px;top:309px;font-size:8.4px;line-height:12px;color:#404040;font-weight:400;transform:translateY(-0.39px) scaleX(1.0249);-webkit-text-stroke:.12px #404040;">26.00 %</span>
<span class="t" id="t78" style="left:667.2px;top:309px;font-size:8.4px;line-height:12px;color:#404040;font-weight:400;transform:translateY(-0.39px) scaleX(1.0244);-webkit-text-stroke:.12px #404040;">R$ 534,00</span>
<span class="t" id="t79" style="left:729.6px;top:309px;font-size:8.4px;line-height:12px;color:#404040;font-weight:400;transform:translateY(-0.39px) scaleX(1.0231);-webkit-text-stroke:.12px #404040;">% Desconto</span>
<span class="t" id="t80" style="left:853.7px;top:309px;font-size:8.4px;line-height:12px;color:#8f92a3;font-weight:400;transform:translateY(-0.39px) scaleX(1.2514);">-</span>
<svg style="left:955px;top:309.9px" width="60" height="12" viewBox="955 309.9 60 12"><path transform="translate(958.7 311.55) scale(.01777)" fill="#28a745" d="M104 224H24c-13.255 0-24 10.745-24 24v240c0 13.255 10.745 24 24 24h80c13.255 0 24-10.745 24-24V248c0-13.255-10.745-24-24-24zM64 472c-13.255 0-24-10.745-24-24s10.745-24 24-24 24 10.745 24 24-10.745 24-24 24zM384 81.452c0 42.416-25.97 66.208-33.277 94.548h101.723c33.397 0 59.397 27.746 59.553 58.098.084 17.938-7.546 37.249-19.439 49.197l-.11.11c9.836 23.337 8.237 56.037-9.308 79.469 8.681 25.895-.069 57.704-16.382 74.757 4.298 17.598 2.244 32.575-6.148 44.632C440.202 511.587 389.616 512 346.839 512l-2.845-.001c-48.287-.017-87.806-17.598-119.56-31.725-15.957-7.099-36.821-15.887-52.651-16.178-6.54-.12-11.783-5.457-11.783-11.998v-213.77c0-3.2 1.282-6.271 3.558-8.521 39.614-39.144 56.648-80.587 89.117-113.111 14.804-14.832 20.188-37.236 25.393-58.902C282.515 39.293 291.817 0 312 0c24 0 72 8 72 81.452z"/><path transform="translate(972.3 320.55) scale(.01777 -.01777)" fill="#fb0d0d" d="M104 224H24c-13.255 0-24 10.745-24 24v240c0 13.255 10.745 24 24 24h80c13.255 0 24-10.745 24-24V248c0-13.255-10.745-24-24-24zM64 472c-13.255 0-24-10.745-24-24s10.745-24 24-24 24 10.745 24 24-10.745 24-24 24zM384 81.452c0 42.416-25.97 66.208-33.277 94.548h101.723c33.397 0 59.397 27.746 59.553 58.098.084 17.938-7.546 37.249-19.439 49.197l-.11.11c9.836 23.337 8.237 56.037-9.308 79.469 8.681 25.895-.069 57.704-16.382 74.757 4.298 17.598 2.244 32.575-6.148 44.632C440.202 511.587 389.616 512 346.839 512l-2.845-.001c-48.287-.017-87.806-17.598-119.56-31.725-15.957-7.099-36.821-15.887-52.651-16.178-6.54-.12-11.783-5.457-11.783-11.998v-213.77c0-3.2 1.282-6.271 3.558-8.521 39.614-39.144 56.648-80.587 89.117-113.111 14.804-14.832 20.188-37.236 25.393-58.902C282.515 39.293 291.817 0 312 0c24 0 72 8 72 81.452z"/><circle cx="990.6" cy="315.9" r="4.4" fill="#1e8fff"/><circle cx="990.6" cy="313.9" r=".7" fill="#fff"/><path d="M989.8 315.1 h1.4 v2.6 h.4 v.7 h-2.2 v-.7 h.4 v-1.9 h-.4 z" fill="#fff"/><path d="M999.3 316.0 C1001.6 311.4 1007 311.4 1009.3 316.0 C1007 320.6 1001.6 320.6 999.3 316.0 Z" fill="#1c1c1c"/><circle cx="1004.3" cy="316.0" r="2.3" fill="#fff"/><circle cx="1004.3" cy="316.0" r="1.45" fill="#1c1c1c"/><circle cx="1003.7" cy="315.4" r=".55" fill="#fff"/></svg></div>
<div class="row">
<div class="hl" style="left:170px;top:351px;width:854px"></div>
<div class="a" style="left:237.7px;top:334px;width:83.7px;height:12px;overflow:hidden">
<span class="t" id="t81" style="left:0.0px;top:0px;font-size:8.4px;line-height:12px;color:#404040;font-weight:400;transform:translateY(-0.49px) scaleX(0.9612);-webkit-text-stroke:.12px #404040;"><i>35379 -TST RAFAEL 9</i>9</span></div>
<div class="a" style="left:331.0px;top:334px;width:83.2px;height:12px;overflow:hidden">
<span class="t" id="t82" style="left:0.4px;top:0px;font-size:8.4px;line-height:12px;color:#404040;font-weight:400;transform:translateY(-0.49px) scaleX(0.9546);-webkit-text-stroke:.12px #404040;"><i>10 - COD. 10 - SUPER</i>V</span></div>
<span class="t" id="t83" style="left:424.6px;top:334px;font-size:8.4px;line-height:12px;color:#404040;font-weight:400;transform:translateY(-0.49px) scaleX(0.9951);-webkit-text-stroke:.12px #404040;">A6</span>
<span class="t" id="t84" style="left:455.6px;top:334px;font-size:8.4px;line-height:12px;color:#404040;font-weight:400;transform:translateY(-0.49px) scaleX(0.9582);-webkit-text-stroke:.12px #404040;">28 DIAS</span>
<span class="t" id="t85" style="left:530.3px;top:334px;font-size:8.4px;line-height:12px;color:#404040;font-weight:400;transform:translateY(-0.49px) scaleX(0.9499);-webkit-text-stroke:.12px #404040;">11.00 %</span>
<span class="t" id="t86" style="left:598.8px;top:334px;font-size:8.4px;line-height:12px;color:#404040;font-weight:400;transform:translateY(-0.49px) scaleX(1.0151);-webkit-text-stroke:.12px #404040;">23.00 %</span>
<span class="t" id="t87" style="left:667.2px;top:334px;font-size:8.4px;line-height:12px;color:#404040;font-weight:400;transform:translateY(-0.49px) scaleX(0.9287);-webkit-text-stroke:.12px #404040;">R$ 172,66</span>
<span class="t" id="t88" style="left:729.6px;top:334px;font-size:8.4px;line-height:12px;color:#404040;font-weight:400;transform:translateY(-0.49px) scaleX(1.0231);-webkit-text-stroke:.12px #404040;">% Desconto</span>
<span class="t" id="t89" style="left:853.7px;top:334px;font-size:8.4px;line-height:12px;color:#8f92a3;font-weight:400;transform:translateY(-0.49px) scaleX(1.2514);">-</span>
<svg style="left:955px;top:334.8px" width="60" height="12" viewBox="955 334.8 60 12"><path transform="translate(958.7 336.45) scale(.01777)" fill="#28a745" d="M104 224H24c-13.255 0-24 10.745-24 24v240c0 13.255 10.745 24 24 24h80c13.255 0 24-10.745 24-24V248c0-13.255-10.745-24-24-24zM64 472c-13.255 0-24-10.745-24-24s10.745-24 24-24 24 10.745 24 24-10.745 24-24 24zM384 81.452c0 42.416-25.97 66.208-33.277 94.548h101.723c33.397 0 59.397 27.746 59.553 58.098.084 17.938-7.546 37.249-19.439 49.197l-.11.11c9.836 23.337 8.237 56.037-9.308 79.469 8.681 25.895-.069 57.704-16.382 74.757 4.298 17.598 2.244 32.575-6.148 44.632C440.202 511.587 389.616 512 346.839 512l-2.845-.001c-48.287-.017-87.806-17.598-119.56-31.725-15.957-7.099-36.821-15.887-52.651-16.178-6.54-.12-11.783-5.457-11.783-11.998v-213.77c0-3.2 1.282-6.271 3.558-8.521 39.614-39.144 56.648-80.587 89.117-113.111 14.804-14.832 20.188-37.236 25.393-58.902C282.515 39.293 291.817 0 312 0c24 0 72 8 72 81.452z"/><path transform="translate(972.3 345.45) scale(.01777 -.01777)" fill="#fb0d0d" d="M104 224H24c-13.255 0-24 10.745-24 24v240c0 13.255 10.745 24 24 24h80c13.255 0 24-10.745 24-24V248c0-13.255-10.745-24-24-24zM64 472c-13.255 0-24-10.745-24-24s10.745-24 24-24 24 10.745 24 24-10.745 24-24 24zM384 81.452c0 42.416-25.97 66.208-33.277 94.548h101.723c33.397 0 59.397 27.746 59.553 58.098.084 17.938-7.546 37.249-19.439 49.197l-.11.11c9.836 23.337 8.237 56.037-9.308 79.469 8.681 25.895-.069 57.704-16.382 74.757 4.298 17.598 2.244 32.575-6.148 44.632C440.202 511.587 389.616 512 346.839 512l-2.845-.001c-48.287-.017-87.806-17.598-119.56-31.725-15.957-7.099-36.821-15.887-52.651-16.178-6.54-.12-11.783-5.457-11.783-11.998v-213.77c0-3.2 1.282-6.271 3.558-8.521 39.614-39.144 56.648-80.587 89.117-113.111 14.804-14.832 20.188-37.236 25.393-58.902C282.515 39.293 291.817 0 312 0c24 0 72 8 72 81.452z"/><circle cx="990.6" cy="340.8" r="4.4" fill="#1e8fff"/><circle cx="990.6" cy="338.8" r=".7" fill="#fff"/><path d="M989.8 340.0 h1.4 v2.6 h.4 v.7 h-2.2 v-.7 h.4 v-1.9 h-.4 z" fill="#fff"/><path d="M999.3 340.9 C1001.6 336.3 1007 336.3 1009.3 340.9 C1007 345.5 1001.6 345.5 999.3 340.9 Z" fill="#1c1c1c"/><circle cx="1004.3" cy="340.9" r="2.3" fill="#fff"/><circle cx="1004.3" cy="340.9" r="1.45" fill="#1c1c1c"/><circle cx="1003.7" cy="340.3" r=".55" fill="#fff"/></svg></div>
<div class="row">
<div class="hl" style="left:170px;top:376px;width:854px"></div>
<div class="a" style="left:237.7px;top:358px;width:83.7px;height:12px;overflow:hidden">
<span class="t" id="t90" style="left:0.0px;top:0px;font-size:8.4px;line-height:12px;color:#404040;font-weight:400;transform:translateY(0.41px) scaleX(0.9612);-webkit-text-stroke:.12px #404040;"><i>35379 -TST RAFAEL 9</i>9</span></div>
<div class="a" style="left:331.0px;top:358px;width:83.2px;height:12px;overflow:hidden">
<span class="t" id="t91" style="left:0.4px;top:0px;font-size:8.4px;line-height:12px;color:#404040;font-weight:400;transform:translateY(0.41px) scaleX(0.9546);-webkit-text-stroke:.12px #404040;"><i>10 - COD. 10 - SUPER</i>V</span></div>
<span class="t" id="t92" style="left:424.6px;top:358px;font-size:8.4px;line-height:12px;color:#404040;font-weight:400;transform:translateY(0.41px) scaleX(0.9951);-webkit-text-stroke:.12px #404040;">A6</span>
<span class="t" id="t93" style="left:455.6px;top:358px;font-size:8.4px;line-height:12px;color:#404040;font-weight:400;transform:translateY(0.41px) scaleX(0.9582);-webkit-text-stroke:.12px #404040;">28 DIAS</span>
<span class="t" id="t94" style="left:530.3px;top:358px;font-size:8.4px;line-height:12px;color:#404040;font-weight:400;transform:translateY(0.41px) scaleX(1.0392);-webkit-text-stroke:.12px #404040;">6.00 %</span>
<span class="t" id="t95" style="left:598.8px;top:358px;font-size:8.4px;line-height:12px;color:#404040;font-weight:400;transform:translateY(0.41px) scaleX(0.9696);-webkit-text-stroke:.12px #404040;">21.00 %</span>
<span class="t" id="t96" style="left:667.2px;top:358px;font-size:8.4px;line-height:12px;color:#404040;font-weight:400;transform:translateY(0.41px) scaleX(0.9287);-webkit-text-stroke:.12px #404040;">R$ 182,36</span>
<span class="t" id="t97" style="left:729.6px;top:358px;font-size:8.4px;line-height:12px;color:#404040;font-weight:400;transform:translateY(0.41px) scaleX(1.0231);-webkit-text-stroke:.12px #404040;">% Desconto</span>
<span class="t" id="t98" style="left:853.7px;top:358px;font-size:8.4px;line-height:12px;color:#8f92a3;font-weight:400;transform:translateY(0.41px) scaleX(1.2514);">-</span>
<svg style="left:955px;top:359.7px" width="60" height="12" viewBox="955 359.7 60 12"><path transform="translate(958.7 361.35) scale(.01777)" fill="#28a745" d="M104 224H24c-13.255 0-24 10.745-24 24v240c0 13.255 10.745 24 24 24h80c13.255 0 24-10.745 24-24V248c0-13.255-10.745-24-24-24zM64 472c-13.255 0-24-10.745-24-24s10.745-24 24-24 24 10.745 24 24-10.745 24-24 24zM384 81.452c0 42.416-25.97 66.208-33.277 94.548h101.723c33.397 0 59.397 27.746 59.553 58.098.084 17.938-7.546 37.249-19.439 49.197l-.11.11c9.836 23.337 8.237 56.037-9.308 79.469 8.681 25.895-.069 57.704-16.382 74.757 4.298 17.598 2.244 32.575-6.148 44.632C440.202 511.587 389.616 512 346.839 512l-2.845-.001c-48.287-.017-87.806-17.598-119.56-31.725-15.957-7.099-36.821-15.887-52.651-16.178-6.54-.12-11.783-5.457-11.783-11.998v-213.77c0-3.2 1.282-6.271 3.558-8.521 39.614-39.144 56.648-80.587 89.117-113.111 14.804-14.832 20.188-37.236 25.393-58.902C282.515 39.293 291.817 0 312 0c24 0 72 8 72 81.452z"/><path transform="translate(972.3 370.35) scale(.01777 -.01777)" fill="#fb0d0d" d="M104 224H24c-13.255 0-24 10.745-24 24v240c0 13.255 10.745 24 24 24h80c13.255 0 24-10.745 24-24V248c0-13.255-10.745-24-24-24zM64 472c-13.255 0-24-10.745-24-24s10.745-24 24-24 24 10.745 24 24-10.745 24-24 24zM384 81.452c0 42.416-25.97 66.208-33.277 94.548h101.723c33.397 0 59.397 27.746 59.553 58.098.084 17.938-7.546 37.249-19.439 49.197l-.11.11c9.836 23.337 8.237 56.037-9.308 79.469 8.681 25.895-.069 57.704-16.382 74.757 4.298 17.598 2.244 32.575-6.148 44.632C440.202 511.587 389.616 512 346.839 512l-2.845-.001c-48.287-.017-87.806-17.598-119.56-31.725-15.957-7.099-36.821-15.887-52.651-16.178-6.54-.12-11.783-5.457-11.783-11.998v-213.77c0-3.2 1.282-6.271 3.558-8.521 39.614-39.144 56.648-80.587 89.117-113.111 14.804-14.832 20.188-37.236 25.393-58.902C282.515 39.293 291.817 0 312 0c24 0 72 8 72 81.452z"/><circle cx="990.6" cy="365.7" r="4.4" fill="#1e8fff"/><circle cx="990.6" cy="363.7" r=".7" fill="#fff"/><path d="M989.8 364.9 h1.4 v2.6 h.4 v.7 h-2.2 v-.7 h.4 v-1.9 h-.4 z" fill="#fff"/><path d="M999.3 365.8 C1001.6 361.2 1007 361.2 1009.3 365.8 C1007 370.4 1001.6 370.4 999.3 365.8 Z" fill="#1c1c1c"/><circle cx="1004.3" cy="365.8" r="2.3" fill="#fff"/><circle cx="1004.3" cy="365.8" r="1.45" fill="#1c1c1c"/><circle cx="1003.7" cy="365.2" r=".55" fill="#fff"/></svg></div>
<div class="row">
<div class="a" style="left:170px;top:376px;width:854px;height:25px;background:#d5e0f1"></div>
<div class="hl" style="left:170px;top:400px;width:854px"></div>
<div class="a" style="left:237.7px;top:383px;width:83.7px;height:12px;overflow:hidden">
<span class="t" id="t99" style="left:0.0px;top:0px;font-size:8.4px;line-height:12px;color:#404040;font-weight:400;transform:translateY(0.31px) scaleX(0.9612);-webkit-text-stroke:.12px #404040;"><i>35379 -TST RAFAEL 9</i>9</span></div>
<div class="a" style="left:331.0px;top:383px;width:83.2px;height:12px;overflow:hidden">
<span class="t" id="t100" style="left:0.4px;top:0px;font-size:8.4px;line-height:12px;color:#404040;font-weight:400;transform:translateY(0.31px) scaleX(0.9546);-webkit-text-stroke:.12px #404040;"><i>10 - COD. 10 - SUPER</i>V</span></div>
<span class="t" id="t101" style="left:424.6px;top:383px;font-size:8.4px;line-height:12px;color:#404040;font-weight:400;transform:translateY(0.31px) scaleX(0.9951);-webkit-text-stroke:.12px #404040;">A6</span>
<span class="t" id="t102" style="left:455.6px;top:383px;font-size:8.4px;line-height:12px;color:#404040;font-weight:400;transform:translateY(0.31px) scaleX(0.9582);-webkit-text-stroke:.12px #404040;">28 DIAS</span>
<span class="t" id="t103" style="left:530.3px;top:383px;font-size:8.4px;line-height:12px;color:#404040;font-weight:400;transform:translateY(0.31px) scaleX(1.0392);-webkit-text-stroke:.12px #404040;">8.00 %</span>
<span class="t" id="t104" style="left:598.8px;top:383px;font-size:8.4px;line-height:12px;color:#404040;font-weight:400;transform:translateY(0.31px) scaleX(1.0509);-webkit-text-stroke:.12px #404040;">20.00 %</span>
<span class="t" id="t105" style="left:667.2px;top:383px;font-size:8.4px;line-height:12px;color:#404040;font-weight:400;transform:translateY(0.31px) scaleX(0.9313);-webkit-text-stroke:.12px #404040;">R$ 179,45</span>
<span class="t" id="t106" style="left:729.6px;top:383px;font-size:8.4px;line-height:12px;color:#404040;font-weight:400;transform:translateY(0.31px) scaleX(1.0231);-webkit-text-stroke:.12px #404040;">% Desconto</span>
<span class="t" id="t107" style="left:853.7px;top:383px;font-size:8.4px;line-height:12px;color:#8f92a3;font-weight:400;transform:translateY(0.31px) scaleX(1.2514);">-</span>
<div class="a" style="left:984.2px;top:377.4px;width:12.8px;height:12.8px;border-radius:50%;background:#c2c6d3"></div>
<svg style="left:955px;top:384.6px" width="60" height="12" viewBox="955 384.6 60 12"><path transform="translate(958.7 386.25) scale(.01777)" fill="#28a745" d="M104 224H24c-13.255 0-24 10.745-24 24v240c0 13.255 10.745 24 24 24h80c13.255 0 24-10.745 24-24V248c0-13.255-10.745-24-24-24zM64 472c-13.255 0-24-10.745-24-24s10.745-24 24-24 24 10.745 24 24-10.745 24-24 24zM384 81.452c0 42.416-25.97 66.208-33.277 94.548h101.723c33.397 0 59.397 27.746 59.553 58.098.084 17.938-7.546 37.249-19.439 49.197l-.11.11c9.836 23.337 8.237 56.037-9.308 79.469 8.681 25.895-.069 57.704-16.382 74.757 4.298 17.598 2.244 32.575-6.148 44.632C440.202 511.587 389.616 512 346.839 512l-2.845-.001c-48.287-.017-87.806-17.598-119.56-31.725-15.957-7.099-36.821-15.887-52.651-16.178-6.54-.12-11.783-5.457-11.783-11.998v-213.77c0-3.2 1.282-6.271 3.558-8.521 39.614-39.144 56.648-80.587 89.117-113.111 14.804-14.832 20.188-37.236 25.393-58.902C282.515 39.293 291.817 0 312 0c24 0 72 8 72 81.452z"/><path transform="translate(972.3 395.25) scale(.01777 -.01777)" fill="#fb0d0d" d="M104 224H24c-13.255 0-24 10.745-24 24v240c0 13.255 10.745 24 24 24h80c13.255 0 24-10.745 24-24V248c0-13.255-10.745-24-24-24zM64 472c-13.255 0-24-10.745-24-24s10.745-24 24-24 24 10.745 24 24-10.745 24-24 24zM384 81.452c0 42.416-25.97 66.208-33.277 94.548h101.723c33.397 0 59.397 27.746 59.553 58.098.084 17.938-7.546 37.249-19.439 49.197l-.11.11c9.836 23.337 8.237 56.037-9.308 79.469 8.681 25.895-.069 57.704-16.382 74.757 4.298 17.598 2.244 32.575-6.148 44.632C440.202 511.587 389.616 512 346.839 512l-2.845-.001c-48.287-.017-87.806-17.598-119.56-31.725-15.957-7.099-36.821-15.887-52.651-16.178-6.54-.12-11.783-5.457-11.783-11.998v-213.77c0-3.2 1.282-6.271 3.558-8.521 39.614-39.144 56.648-80.587 89.117-113.111 14.804-14.832 20.188-37.236 25.393-58.902C282.515 39.293 291.817 0 312 0c24 0 72 8 72 81.452z"/><circle cx="990.6" cy="390.6" r="4.4" fill="#1e8fff"/><circle cx="990.6" cy="388.6" r=".7" fill="#fff"/><path d="M989.8 389.8 h1.4 v2.6 h.4 v.7 h-2.2 v-.7 h.4 v-1.9 h-.4 z" fill="#fff"/><path d="M999.3 390.7 C1001.6 386.1 1007 386.1 1009.3 390.7 C1007 395.3 1001.6 395.3 999.3 390.7 Z" fill="#1c1c1c"/><circle cx="1004.3" cy="390.7" r="2.3" fill="#fff"/><circle cx="1004.3" cy="390.7" r="1.45" fill="#1c1c1c"/><circle cx="1003.7" cy="390.1" r=".55" fill="#fff"/></svg></div>
<div class="row">
<div class="hl" style="left:170px;top:425px;width:854px"></div>
<div class="a" style="left:237.7px;top:408px;width:83.7px;height:12px;overflow:hidden">
<span class="t" id="t108" style="left:0.0px;top:0px;font-size:8.4px;line-height:12px;color:#404040;font-weight:400;transform:translateY(0.21px) scaleX(0.9612);-webkit-text-stroke:.12px #404040;"><i>35379 -TST RAFAEL 9</i>9</span></div>
<div class="a" style="left:331.0px;top:408px;width:83.2px;height:12px;overflow:hidden">
<span class="t" id="t109" style="left:0.4px;top:0px;font-size:8.4px;line-height:12px;color:#404040;font-weight:400;transform:translateY(0.21px) scaleX(0.9546);-webkit-text-stroke:.12px #404040;"><i>10 - COD. 10 - SUPER</i>V</span></div>
<span class="t" id="t110" style="left:424.6px;top:408px;font-size:8.4px;line-height:12px;color:#404040;font-weight:400;transform:translateY(0.21px) scaleX(0.9951);-webkit-text-stroke:.12px #404040;">A6</span>
<span class="t" id="t111" style="left:455.6px;top:408px;font-size:8.4px;line-height:12px;color:#404040;font-weight:400;transform:translateY(0.21px) scaleX(0.9582);-webkit-text-stroke:.12px #404040;">28 DIAS</span>
<span class="t" id="t112" style="left:530.3px;top:408px;font-size:8.4px;line-height:12px;color:#404040;font-weight:400;transform:translateY(0.21px) scaleX(1.0545);-webkit-text-stroke:.12px #404040;">4.00 %</span>
<span class="t" id="t113" style="left:598.8px;top:408px;font-size:8.4px;line-height:12px;color:#404040;font-weight:400;transform:translateY(0.21px) scaleX(1.0151);-webkit-text-stroke:.12px #404040;">22.00 %</span>
<span class="t" id="t114" style="left:667.2px;top:408px;font-size:8.4px;line-height:12px;color:#404040;font-weight:400;transform:translateY(0.21px) scaleX(0.9287);-webkit-text-stroke:.12px #404040;">R$ 185,27</span>
<span class="t" id="t115" style="left:729.6px;top:408px;font-size:8.4px;line-height:12px;color:#404040;font-weight:400;transform:translateY(0.21px) scaleX(1.0231);-webkit-text-stroke:.12px #404040;">% Desconto</span>
<span class="t" id="t116" style="left:853.7px;top:408px;font-size:8.4px;line-height:12px;color:#8f92a3;font-weight:400;transform:translateY(0.21px) scaleX(1.2514);">-</span>
<svg style="left:955px;top:409.5px" width="60" height="12" viewBox="955 409.5 60 12"><path transform="translate(958.7 411.15) scale(.01777)" fill="#28a745" d="M104 224H24c-13.255 0-24 10.745-24 24v240c0 13.255 10.745 24 24 24h80c13.255 0 24-10.745 24-24V248c0-13.255-10.745-24-24-24zM64 472c-13.255 0-24-10.745-24-24s10.745-24 24-24 24 10.745 24 24-10.745 24-24 24zM384 81.452c0 42.416-25.97 66.208-33.277 94.548h101.723c33.397 0 59.397 27.746 59.553 58.098.084 17.938-7.546 37.249-19.439 49.197l-.11.11c9.836 23.337 8.237 56.037-9.308 79.469 8.681 25.895-.069 57.704-16.382 74.757 4.298 17.598 2.244 32.575-6.148 44.632C440.202 511.587 389.616 512 346.839 512l-2.845-.001c-48.287-.017-87.806-17.598-119.56-31.725-15.957-7.099-36.821-15.887-52.651-16.178-6.54-.12-11.783-5.457-11.783-11.998v-213.77c0-3.2 1.282-6.271 3.558-8.521 39.614-39.144 56.648-80.587 89.117-113.111 14.804-14.832 20.188-37.236 25.393-58.902C282.515 39.293 291.817 0 312 0c24 0 72 8 72 81.452z"/><path transform="translate(972.3 420.15) scale(.01777 -.01777)" fill="#fb0d0d" d="M104 224H24c-13.255 0-24 10.745-24 24v240c0 13.255 10.745 24 24 24h80c13.255 0 24-10.745 24-24V248c0-13.255-10.745-24-24-24zM64 472c-13.255 0-24-10.745-24-24s10.745-24 24-24 24 10.745 24 24-10.745 24-24 24zM384 81.452c0 42.416-25.97 66.208-33.277 94.548h101.723c33.397 0 59.397 27.746 59.553 58.098.084 17.938-7.546 37.249-19.439 49.197l-.11.11c9.836 23.337 8.237 56.037-9.308 79.469 8.681 25.895-.069 57.704-16.382 74.757 4.298 17.598 2.244 32.575-6.148 44.632C440.202 511.587 389.616 512 346.839 512l-2.845-.001c-48.287-.017-87.806-17.598-119.56-31.725-15.957-7.099-36.821-15.887-52.651-16.178-6.54-.12-11.783-5.457-11.783-11.998v-213.77c0-3.2 1.282-6.271 3.558-8.521 39.614-39.144 56.648-80.587 89.117-113.111 14.804-14.832 20.188-37.236 25.393-58.902C282.515 39.293 291.817 0 312 0c24 0 72 8 72 81.452z"/><circle cx="990.6" cy="415.5" r="4.4" fill="#1e8fff"/><circle cx="990.6" cy="413.5" r=".7" fill="#fff"/><path d="M989.8 414.7 h1.4 v2.6 h.4 v.7 h-2.2 v-.7 h.4 v-1.9 h-.4 z" fill="#fff"/><path d="M999.3 415.6 C1001.6 411.0 1007 411.0 1009.3 415.6 C1007 420.2 1001.6 420.2 999.3 415.6 Z" fill="#1c1c1c"/><circle cx="1004.3" cy="415.6" r="2.3" fill="#fff"/><circle cx="1004.3" cy="415.6" r="1.45" fill="#1c1c1c"/><circle cx="1003.7" cy="415.0" r=".55" fill="#fff"/></svg></div>
<div class="row">
<div class="hl" style="left:170px;top:450px;width:854px"></div>
<div class="a" style="left:237.7px;top:433px;width:83.7px;height:12px;overflow:hidden">
<span class="t" id="t117" style="left:0.0px;top:0px;font-size:8.4px;line-height:12px;color:#404040;font-weight:400;transform:translateY(0.11px) scaleX(0.9612);-webkit-text-stroke:.12px #404040;"><i>35379 -TST RAFAEL 9</i>9</span></div>
<div class="a" style="left:331.0px;top:433px;width:83.2px;height:12px;overflow:hidden">
<span class="t" id="t118" style="left:0.4px;top:0px;font-size:8.4px;line-height:12px;color:#404040;font-weight:400;transform:translateY(0.11px) scaleX(0.9546);-webkit-text-stroke:.12px #404040;"><i>10 - COD. 10 - SUPER</i>V</span></div>
<span class="t" id="t119" style="left:424.6px;top:433px;font-size:8.4px;line-height:12px;color:#404040;font-weight:400;transform:translateY(0.11px) scaleX(0.9951);-webkit-text-stroke:.12px #404040;">A6</span>
<span class="t" id="t120" style="left:455.6px;top:433px;font-size:8.4px;line-height:12px;color:#404040;font-weight:400;transform:translateY(0.11px) scaleX(0.9582);-webkit-text-stroke:.12px #404040;">28 DIAS</span>
<span class="t" id="t121" style="left:530.3px;top:433px;font-size:8.4px;line-height:12px;color:#404040;font-weight:400;transform:translateY(0.11px) scaleX(1.0277);-webkit-text-stroke:.12px #404040;">9.00 %</span>
<span class="t" id="t122" style="left:598.8px;top:433px;font-size:8.4px;line-height:12px;color:#404040;font-weight:400;transform:translateY(0.11px) scaleX(1.0379);-webkit-text-stroke:.12px #404040;">24.00 %</span>
<span class="t" id="t123" style="left:667.2px;top:433px;font-size:8.4px;line-height:12px;color:#404040;font-weight:400;transform:translateY(0.11px) scaleX(0.9597);-webkit-text-stroke:.12px #404040;">R$ 369,53</span>
<span class="t" id="t124" style="left:729.6px;top:433px;font-size:8.4px;line-height:12px;color:#404040;font-weight:400;transform:translateY(0.11px) scaleX(1.0231);-webkit-text-stroke:.12px #404040;">% Desconto</span>
<span class="t" id="t125" style="left:853.7px;top:433px;font-size:8.4px;line-height:12px;color:#8f92a3;font-weight:400;transform:translateY(0.11px) scaleX(1.2514);">-</span>
<svg style="left:955px;top:434.4px" width="60" height="12" viewBox="955 434.4 60 12"><path transform="translate(958.7 436.05) scale(.01777)" fill="#28a745" d="M104 224H24c-13.255 0-24 10.745-24 24v240c0 13.255 10.745 24 24 24h80c13.255 0 24-10.745 24-24V248c0-13.255-10.745-24-24-24zM64 472c-13.255 0-24-10.745-24-24s10.745-24 24-24 24 10.745 24 24-10.745 24-24 24zM384 81.452c0 42.416-25.97 66.208-33.277 94.548h101.723c33.397 0 59.397 27.746 59.553 58.098.084 17.938-7.546 37.249-19.439 49.197l-.11.11c9.836 23.337 8.237 56.037-9.308 79.469 8.681 25.895-.069 57.704-16.382 74.757 4.298 17.598 2.244 32.575-6.148 44.632C440.202 511.587 389.616 512 346.839 512l-2.845-.001c-48.287-.017-87.806-17.598-119.56-31.725-15.957-7.099-36.821-15.887-52.651-16.178-6.54-.12-11.783-5.457-11.783-11.998v-213.77c0-3.2 1.282-6.271 3.558-8.521 39.614-39.144 56.648-80.587 89.117-113.111 14.804-14.832 20.188-37.236 25.393-58.902C282.515 39.293 291.817 0 312 0c24 0 72 8 72 81.452z"/><path transform="translate(972.3 445.05) scale(.01777 -.01777)" fill="#fb0d0d" d="M104 224H24c-13.255 0-24 10.745-24 24v240c0 13.255 10.745 24 24 24h80c13.255 0 24-10.745 24-24V248c0-13.255-10.745-24-24-24zM64 472c-13.255 0-24-10.745-24-24s10.745-24 24-24 24 10.745 24 24-10.745 24-24 24zM384 81.452c0 42.416-25.97 66.208-33.277 94.548h101.723c33.397 0 59.397 27.746 59.553 58.098.084 17.938-7.546 37.249-19.439 49.197l-.11.11c9.836 23.337 8.237 56.037-9.308 79.469 8.681 25.895-.069 57.704-16.382 74.757 4.298 17.598 2.244 32.575-6.148 44.632C440.202 511.587 389.616 512 346.839 512l-2.845-.001c-48.287-.017-87.806-17.598-119.56-31.725-15.957-7.099-36.821-15.887-52.651-16.178-6.54-.12-11.783-5.457-11.783-11.998v-213.77c0-3.2 1.282-6.271 3.558-8.521 39.614-39.144 56.648-80.587 89.117-113.111 14.804-14.832 20.188-37.236 25.393-58.902C282.515 39.293 291.817 0 312 0c24 0 72 8 72 81.452z"/><circle cx="990.6" cy="440.4" r="4.4" fill="#1e8fff"/><circle cx="990.6" cy="438.4" r=".7" fill="#fff"/><path d="M989.8 439.6 h1.4 v2.6 h.4 v.7 h-2.2 v-.7 h.4 v-1.9 h-.4 z" fill="#fff"/><path d="M999.3 440.5 C1001.6 435.9 1007 435.9 1009.3 440.5 C1007 445.1 1001.6 445.1 999.3 440.5 Z" fill="#1c1c1c"/><circle cx="1004.3" cy="440.5" r="2.3" fill="#fff"/><circle cx="1004.3" cy="440.5" r="1.45" fill="#1c1c1c"/><circle cx="1003.7" cy="439.9" r=".55" fill="#fff"/></svg></div>
<div class="row">
<div class="hl" style="left:170px;top:475px;width:854px"></div>
<span class="t" id="t126" style="left:238.0px;top:458px;font-size:8.4px;line-height:12px;color:#404040;font-weight:400;transform:translateY(0.01px) scaleX(1.0316);-webkit-text-stroke:.12px #404040;">15439 -teste sync</span>
<div class="a" style="left:331.0px;top:458px;width:83.2px;height:12px;overflow:hidden">
<span class="t" id="t127" style="left:0.4px;top:0px;font-size:8.4px;line-height:12px;color:#404040;font-weight:400;transform:translateY(0.01px) scaleX(0.9546);-webkit-text-stroke:.12px #404040;"><i>10 - COD. 10 - SUPER</i>V</span></div>
<span class="t" id="t128" style="left:424.0px;top:458px;font-size:8.4px;line-height:12px;color:#404040;font-weight:400;transform:translateY(0.01px) scaleX(1.0060);-webkit-text-stroke:.12px #404040;">1</span>
<span class="t" id="t129" style="left:455.6px;top:458px;font-size:8.4px;line-height:12px;color:#404040;font-weight:400;transform:translateY(0.01px) scaleX(0.9582);-webkit-text-stroke:.12px #404040;">28 DIAS</span>
<span class="t" id="t130" style="left:530.3px;top:458px;font-size:8.4px;line-height:12px;color:#404040;font-weight:400;transform:translateY(0.01px) scaleX(1.0119);-webkit-text-stroke:.12px #404040;">10.00 %</span>
<span class="t" id="t131" style="left:598.8px;top:458px;font-size:8.4px;line-height:12px;color:#404040;font-weight:400;transform:translateY(0.01px) scaleX(0.9566);-webkit-text-stroke:.12px #404040;">22.29 %</span>
<span class="t" id="t132" style="left:667.2px;top:458px;font-size:8.4px;line-height:12px;color:#404040;font-weight:400;transform:translateY(0.01px) scaleX(1.0063);-webkit-text-stroke:.12px #404040;">R$ 436,50</span>
<div class="a" style="left:729.1px;top:458px;width:114.9px;height:12px;overflow:hidden">
<span class="t" id="t133" style="left:0.0px;top:0px;font-size:8.4px;line-height:12px;color:#404040;font-weight:400;transform:translateY(0.01px) scaleX(1.0368);-webkit-text-stroke:.12px #404040;"><i>Saldo Conta Corrente Negati</i>vo</span></div>
<span class="t" id="t134" style="left:853.7px;top:458px;font-size:8.4px;line-height:12px;color:#8f92a3;font-weight:400;transform:translateY(0.01px) scaleX(1.2514);">-</span>
<svg style="left:955px;top:459.3px" width="60" height="12" viewBox="955 459.3 60 12"><path transform="translate(958.7 460.95) scale(.01777)" fill="#28a745" d="M104 224H24c-13.255 0-24 10.745-24 24v240c0 13.255 10.745 24 24 24h80c13.255 0 24-10.745 24-24V248c0-13.255-10.745-24-24-24zM64 472c-13.255 0-24-10.745-24-24s10.745-24 24-24 24 10.745 24 24-10.745 24-24 24zM384 81.452c0 42.416-25.97 66.208-33.277 94.548h101.723c33.397 0 59.397 27.746 59.553 58.098.084 17.938-7.546 37.249-19.439 49.197l-.11.11c9.836 23.337 8.237 56.037-9.308 79.469 8.681 25.895-.069 57.704-16.382 74.757 4.298 17.598 2.244 32.575-6.148 44.632C440.202 511.587 389.616 512 346.839 512l-2.845-.001c-48.287-.017-87.806-17.598-119.56-31.725-15.957-7.099-36.821-15.887-52.651-16.178-6.54-.12-11.783-5.457-11.783-11.998v-213.77c0-3.2 1.282-6.271 3.558-8.521 39.614-39.144 56.648-80.587 89.117-113.111 14.804-14.832 20.188-37.236 25.393-58.902C282.515 39.293 291.817 0 312 0c24 0 72 8 72 81.452z"/><path transform="translate(972.3 469.95) scale(.01777 -.01777)" fill="#fb0d0d" d="M104 224H24c-13.255 0-24 10.745-24 24v240c0 13.255 10.745 24 24 24h80c13.255 0 24-10.745 24-24V248c0-13.255-10.745-24-24-24zM64 472c-13.255 0-24-10.745-24-24s10.745-24 24-24 24 10.745 24 24-10.745 24-24 24zM384 81.452c0 42.416-25.97 66.208-33.277 94.548h101.723c33.397 0 59.397 27.746 59.553 58.098.084 17.938-7.546 37.249-19.439 49.197l-.11.11c9.836 23.337 8.237 56.037-9.308 79.469 8.681 25.895-.069 57.704-16.382 74.757 4.298 17.598 2.244 32.575-6.148 44.632C440.202 511.587 389.616 512 346.839 512l-2.845-.001c-48.287-.017-87.806-17.598-119.56-31.725-15.957-7.099-36.821-15.887-52.651-16.178-6.54-.12-11.783-5.457-11.783-11.998v-213.77c0-3.2 1.282-6.271 3.558-8.521 39.614-39.144 56.648-80.587 89.117-113.111 14.804-14.832 20.188-37.236 25.393-58.902C282.515 39.293 291.817 0 312 0c24 0 72 8 72 81.452z"/><circle cx="990.6" cy="465.3" r="4.4" fill="#1e8fff"/><circle cx="990.6" cy="463.3" r=".7" fill="#fff"/><path d="M989.8 464.5 h1.4 v2.6 h.4 v.7 h-2.2 v-.7 h.4 v-1.9 h-.4 z" fill="#fff"/><path d="M999.3 465.4 C1001.6 460.8 1007 460.8 1009.3 465.4 C1007 470.0 1001.6 470.0 999.3 465.4 Z" fill="#1c1c1c"/><circle cx="1004.3" cy="465.4" r="2.3" fill="#fff"/><circle cx="1004.3" cy="465.4" r="1.45" fill="#1c1c1c"/><circle cx="1003.7" cy="464.8" r=".55" fill="#fff"/></svg></div>
<div class="a" style="left:170px;top:482px;width:854px;height:11px;background:#f1f1f1"></div>
<div class="a" style="left:539px;top:483px;width:470px;height:9px;background:#c1c1c1"></div>
<svg style="left:170px;top:482px" width="854" height="11" viewBox="170 482 854 11">
<path d="M177.8 485.2 L175.2 487.3 L177.8 489.4 Z" fill="#505050"/><path d="M1016.8 485.2 L1019.4 487.3 L1016.8 489.4 Z" fill="#505050"/></svg>
<span class="t" id="t135" style="left:180.1px;top:504px;font-size:7.6px;line-height:11px;color:#83859b;font-weight:400;transform:translateY(-0.28px) scaleX(1.0440);">Total de registros: 10</span>
<span class="t" id="t136" style="left:261.8px;top:504px;font-size:7.6px;line-height:11px;color:#83859b;font-weight:400;transform:translateY(-0.48px) scaleX(0.6047);">|</span>
<span class="t" id="t137" style="left:271.3px;top:504px;font-size:7.6px;line-height:11px;color:#83859b;font-weight:400;transform:translateY(-0.28px) scaleX(1.0351);">Média de "% Desc. pedido": 7.90 %</span>
<span class="t" id="t138" style="left:403.9px;top:504px;font-size:7.6px;line-height:11px;color:#83859b;font-weight:400;transform:translateY(-0.48px) scaleX(0.6047);">|</span>
<span class="t" id="t139" style="left:413.2px;top:504px;font-size:7.6px;line-height:11px;color:#83859b;font-weight:400;transform:translateY(-0.28px) scaleX(1.0248);">Média de "% Lucrativ.": 22.43 %</span>
<span class="t" id="t140" style="left:531.6px;top:504px;font-size:7.6px;line-height:11px;color:#83859b;font-weight:400;transform:translateY(-0.48px) scaleX(0.6047);">|</span>
<span class="t" id="t141" style="left:541.2px;top:504px;font-size:7.6px;line-height:11px;color:#83859b;font-weight:400;transform:translateY(-0.28px) scaleX(1.0392);">Somatória de "Vl. atendido": R$ 3.958,36</span></div>
<section class="dlg" role="dialog" aria-label="Detalhes de Lucratividade">
<svg style="left:0;top:0" width="1357" height="200" viewBox="0 0 1357 200">
<rect x="1083" y="10" width="270.2" height="184" fill="#fff"/>
<path d="M1352.8 10 V193.7 H1083" fill="none" stroke="#9da1a1" stroke-width=".9"/>
<circle cx="1216.4" cy="51.1" r="22.5" fill="none" stroke="#8dd8f3" stroke-width="1.5"/>
<circle cx="1216.35" cy="42.1" r="1.45" fill="#3fc3ee"/>
<rect x="1215.3" y="46.8" width="2.1" height="16" rx="1" fill="#3fc3ee"/>
<rect x="1190.1" y="152.2" width="52.3" height="28.1" rx="3.5" fill="#eef3fb" stroke="#a9c3e8" stroke-width="1"/>
<rect x="1192.1" y="154.6" width="48.8" height="24.1" rx="2.5" fill="#2f80d8"/>
</svg>
<span class="t" id="t142" style="left:1119.4px;top:91px;font-size:16.0px;line-height:19px;color:#555;font-weight:400;transform:translateY(0.03px) scaleX(1.0507);-webkit-text-stroke:.55px #555;">Detalhes de Lucratividade</span>
<span class="t" id="t143" style="left:1115.2px;top:116px;font-size:9.4px;line-height:13px;color:#575757;font-weight:400;transform:translateY(0.17px) scaleX(1.0158);">Não existem Margens de Lucratividade a serem</span>
<span class="t" id="t144" style="left:1186.4px;top:128px;font-size:9.4px;line-height:13px;color:#575757;font-weight:400;transform:translateY(-0.13px) scaleX(1.0114);">apresentadas.</span>
<span class="t" id="t145" style="left:1209.8px;top:161px;font-size:9.0px;line-height:12px;color:#fff;font-weight:400;transform:translateY(-0.48px) scaleX(1.0065);-webkit-text-stroke:.3px #fff;">OK</span></section>
<section class="dlg" role="dialog" aria-label="Lucratividade por Fornecedor">
<svg style="left:0;top:500px" width="1357" height="207" viewBox="0 500 1357 207">
<rect x="678.3" y="524" width="551.4" height="175.8" fill="#fff"/>
<path d="M1229.2 524 V699.8" fill="none" stroke="#80858a" stroke-width="1"/>
<path d="M678.3 699.5 H1229" fill="none" stroke="#dadada" stroke-width=".8" stroke-dasharray="2.5 1.2"/>
<rect x="1169.8" y="665.2" width="48.1" height="23.4" rx="2.5" fill="#c0392b"/>
</svg>
<span class="t" id="t146" style="left:849.8px;top:536px;font-size:15.2px;line-height:19px;color:#3a3a3a;font-weight:400;transform:translateY(-0.16px) scaleX(1.0252);-webkit-text-stroke:.2px #3a3a3a;">Lucratividade por Fornecedor</span>
<div class="hl" style="left:686.3px;top:572px;width:531.5px;background:#e7e7e7"></div>
<div class="hl" style="left:686.3px;top:614px;width:531.5px;background:#e7e7e7"></div>
<div class="hl" style="left:686.3px;top:649px;width:531.5px;background:#e7e7e7"></div>
<span class="t" id="t147" style="left:703.8px;top:587px;font-size:8.3px;line-height:12px;color:#787c82;font-weight:400;transform:translateY(-0.03px) scaleX(1.1099);">Fornecedor</span>
<span class="t" id="t148" style="left:1023.0px;top:587px;font-size:8.3px;line-height:12px;color:#787c82;font-weight:400;transform:translateY(-0.03px) scaleX(1.1183);">Margem de Lucratividade</span>
<span class="t" id="t149" style="left:703.8px;top:626px;font-size:10.2px;line-height:13px;color:#444;font-weight:400;transform:translateY(-0.25px) scaleX(0.9610);">COD. 10 - FORNEC. PARA IMPORTACAO</span>
<span class="t" id="t150" style="left:1023.0px;top:626px;font-size:10.2px;line-height:13px;color:#444;font-weight:400;transform:translateY(-0.25px) scaleX(0.9361);">18.09 %</span>
<span class="t" id="t151" style="left:1180.4px;top:670px;font-size:8.8px;line-height:12px;color:#fff;font-weight:400;transform:translateY(0.35px) scaleX(0.9529);-webkit-text-stroke:.25px #fff;">Fechar</span></section>
<svg class="anno" style="left:0;top:0" width="1357" height="707" viewBox="0 0 1357 707"><rect x="108.35" y="17.45" width="30.00" height="24.10" rx="1.6" fill="none" stroke="#fe0000" stroke-width="2.5"/><rect x="4.95" y="153.45" width="92.70" height="21.50" rx="1.6" fill="none" stroke="#fe0000" stroke-width="2.5"/><rect x="17.25" y="181.85" width="93.70" height="22.80" rx="1.6" fill="none" stroke="#fe0000" stroke-width="2.5"/><rect x="997.35" y="230.35" width="16.60" height="20.10" rx="1.6" fill="none" stroke="#fe0000" stroke-width="2.3"/><rect x="1084.65" y="11.55" width="264.10" height="178.30" rx="1.2" fill="none" stroke="#fe0000" stroke-width="2.5"/><rect x="679.60" y="527.40" width="546.30" height="168.30" rx="1.2" fill="none" stroke="#fe0000" stroke-width="2.6"/><path d="M1018.8 237.2 H1047 V125.8 H1066" fill="none" stroke="#fe0000" stroke-width="1.8"/>
<path d="M1064.8 120.7 L1074.8 125.8 L1064.8 130.9 Z" fill="#fe0000"/>
<path d="M1018.8 245.8 H1074.5 V479" fill="none" stroke="#fe0000" stroke-width="1.8"/>
<path d="M1069.4 477.8 L1074.5 487.6 L1079.6 477.8 Z" fill="#fe0000"/>
</svg>
</body>
</html>
